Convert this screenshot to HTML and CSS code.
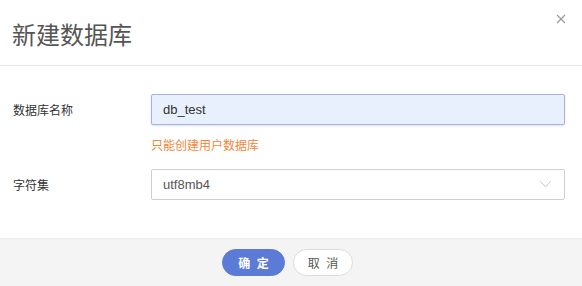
FILE: index.html
```html
<!DOCTYPE html>
<html lang="zh">
<head>
<meta charset="utf-8">
<link rel="stylesheet" href="styles.css">
</head>
<body>
<div class="dialog">
  <div class="header">
    <h1 class="title">新建数据库</h1>
    <button class="close" aria-label="close">
      <svg width="10" height="10" viewBox="0 0 10 10"><path d="M1 1 L9 9 M9 1 L1 9" stroke="#9a9a9a" stroke-width="1.2" fill="none"/></svg>
    </button>
  </div>
  <div class="body">
    <div class="row">
      <label class="label">数据库名称</label>
      <div class="field">
        <div class="input filled">db_test</div>
        <div class="hint">只能创建用户数据库</div>
      </div>
    </div>
    <div class="row row2">
      <label class="label">字符集</label>
      <div class="field">
        <div class="input select">
          <span>utf8mb4</span>
          <svg class="chev" width="11" height="7" viewBox="0 0 11 7"><path d="M0.5 0.5 L5.5 6 L10.5 0.5" stroke="#c4c4c4" stroke-width="1" fill="none"/></svg>
        </div>
      </div>
    </div>
  </div>
  <div class="footer">
    <button class="btn primary">确 定</button>
    <button class="btn">取 消</button>
  </div>
</div>
</body>
</html>
```
FILE: styles.css
```css
* { box-sizing: border-box; }
html, body { margin: 0; padding: 0; background: #fff; }
body { font-family: "Liberation Sans", "Noto Sans CJK SC", sans-serif; color: #333; }
.dialog { width: 582px; height: 286px; display: flex; flex-direction: column; }
.header {
  height: 66px; border-bottom: 1px solid #e6e6e6;
  display: flex; align-items: flex-start; justify-content: space-between;
  padding: 0 16px 0 12px;
}
.title { margin: 18px 0 0; font-size: 24px; font-weight: normal; color: #555; line-height: 32px; font-family: "Noto Sans CJK SC", sans-serif; }
.close { margin-top: 14px; width: 10px; height: 10px; padding: 0; border: 0; background: none; display: flex; }
.body { flex: 1; padding: 28px 17px 0 13px; }
.row { display: flex; }
.row2 { margin-top: 15px; }
.label { width: 138px; font-size: 12px; color: #333; line-height: 31px; font-family: "Noto Sans CJK SC", sans-serif; }
.field { flex: 1; }
.input {
  height: 31px; border: 1px solid #cfcfcf; border-radius: 2px;
  padding: 0 11px; font-size: 13px; color: #333; line-height: 29px;
}
.filled { background: #e8effd; border-color: #a7b1e4; box-shadow: 0 1px 2px rgba(120,130,200,0.25); }
.select { display: flex; align-items: center; justify-content: space-between; color: #555; padding-right: 13px; }
.chev { display: block; }
.hint { margin-top: 11px; font-size: 12px; line-height: 18px; color: #f0873a; font-family: "Noto Sans CJK SC", sans-serif; }
.footer {
  height: 48px; background: #f4f4f4; border-top: 1px solid #ececec;
  display: flex; align-items: center; justify-content: center; gap: 8px;
  padding-right: 7px;
}
.btn {
  height: 27px; width: 60px; border-radius: 14px; border: 1px solid #dcdcdc;
  background: #fff; color: #555; font-size: 12px; letter-spacing: 2px; padding: 0 0 0 2px;
  font-family: "Noto Sans CJK SC", sans-serif;
}
.primary { width: 63px; background: #5b7bd6; border-color: #5b7bd6; color: #fff; font-weight: bold; }
```
